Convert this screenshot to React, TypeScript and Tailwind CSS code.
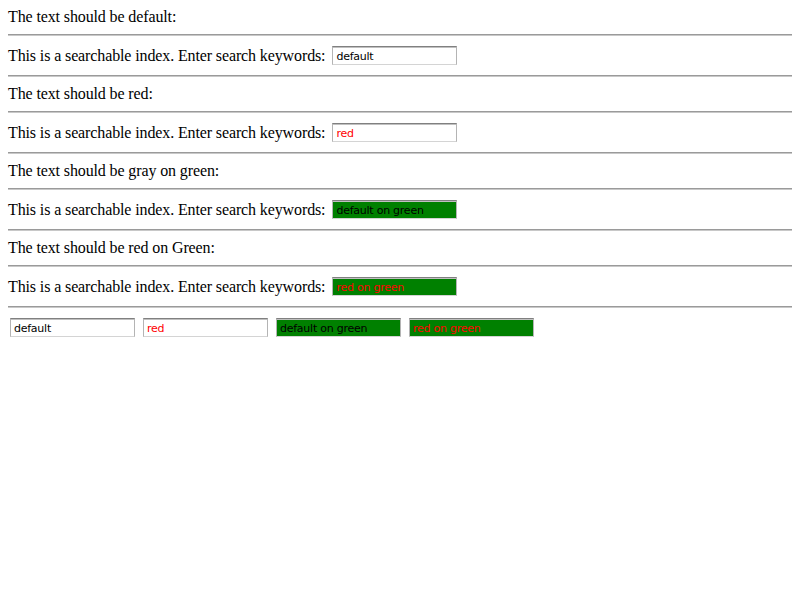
import React from "react";

function Rule() {
  return <div className="my-2 h-[2px] border-t border-t-[#9a9a9a] border-b border-b-[#c8c8c8]" />;
}

function Field({ value, className }: { value: string; className: string }) {
  return (
    <input
      readOnly
      defaultValue={value}
      className={`box-border h-[19px] w-[125px] border border-t-[#808080] border-x-[#b4b4b4] border-b-[#d4d4d4] px-[3px] pt-[1px] text-[11px] tracking-[-0.25px] font-['DejaVu_Sans',sans-serif] outline-none shadow-[inset_0_1px_0_#c0c0c0] ${className}`}
    />
  );
}

function Searchable({ value, className }: { value: string; className: string }) {
  return (
    <>
      <Rule />
      <div className="flex h-[23px] items-center">
        <span>This is a searchable index. Enter search keywords:</span>
        <span className="ml-[7px] flex">
          <Field value={value} className={className} />
        </span>
      </div>
      <Rule />
    </>
  );
}

const tests = [
  { label: "The text should be default:", value: "default", className: "bg-white text-black" },
  { label: "The text should be red:", value: "red", className: "bg-white text-[#ff0000]" },
  { label: "The text should be gray on green:", value: "default on green", className: "bg-[#008000] text-black" },
  { label: "The text should be red on Green:", value: "red on green", className: "bg-[#008000] text-[#ff0000]" },
];

export default function App() {
  return (
    <div className="flex min-h-[600px] flex-col bg-white p-2 font-['Liberation_Serif',serif] text-[16px] leading-[18px] tracking-[-0.12px] text-black">
      {tests.map((t) => (
        <React.Fragment key={t.value}>
          <div className="h-[18px]">{t.label}</div>
          <Searchable value={t.value} className={t.className} />
        </React.Fragment>
      ))}
      <div className="flex h-[23px] items-center gap-2 pl-[2px]">
        {tests.map((t) => (
          <Field key={t.value} value={t.value} className={t.className} />
        ))}
      </div>
    </div>
  );
}
